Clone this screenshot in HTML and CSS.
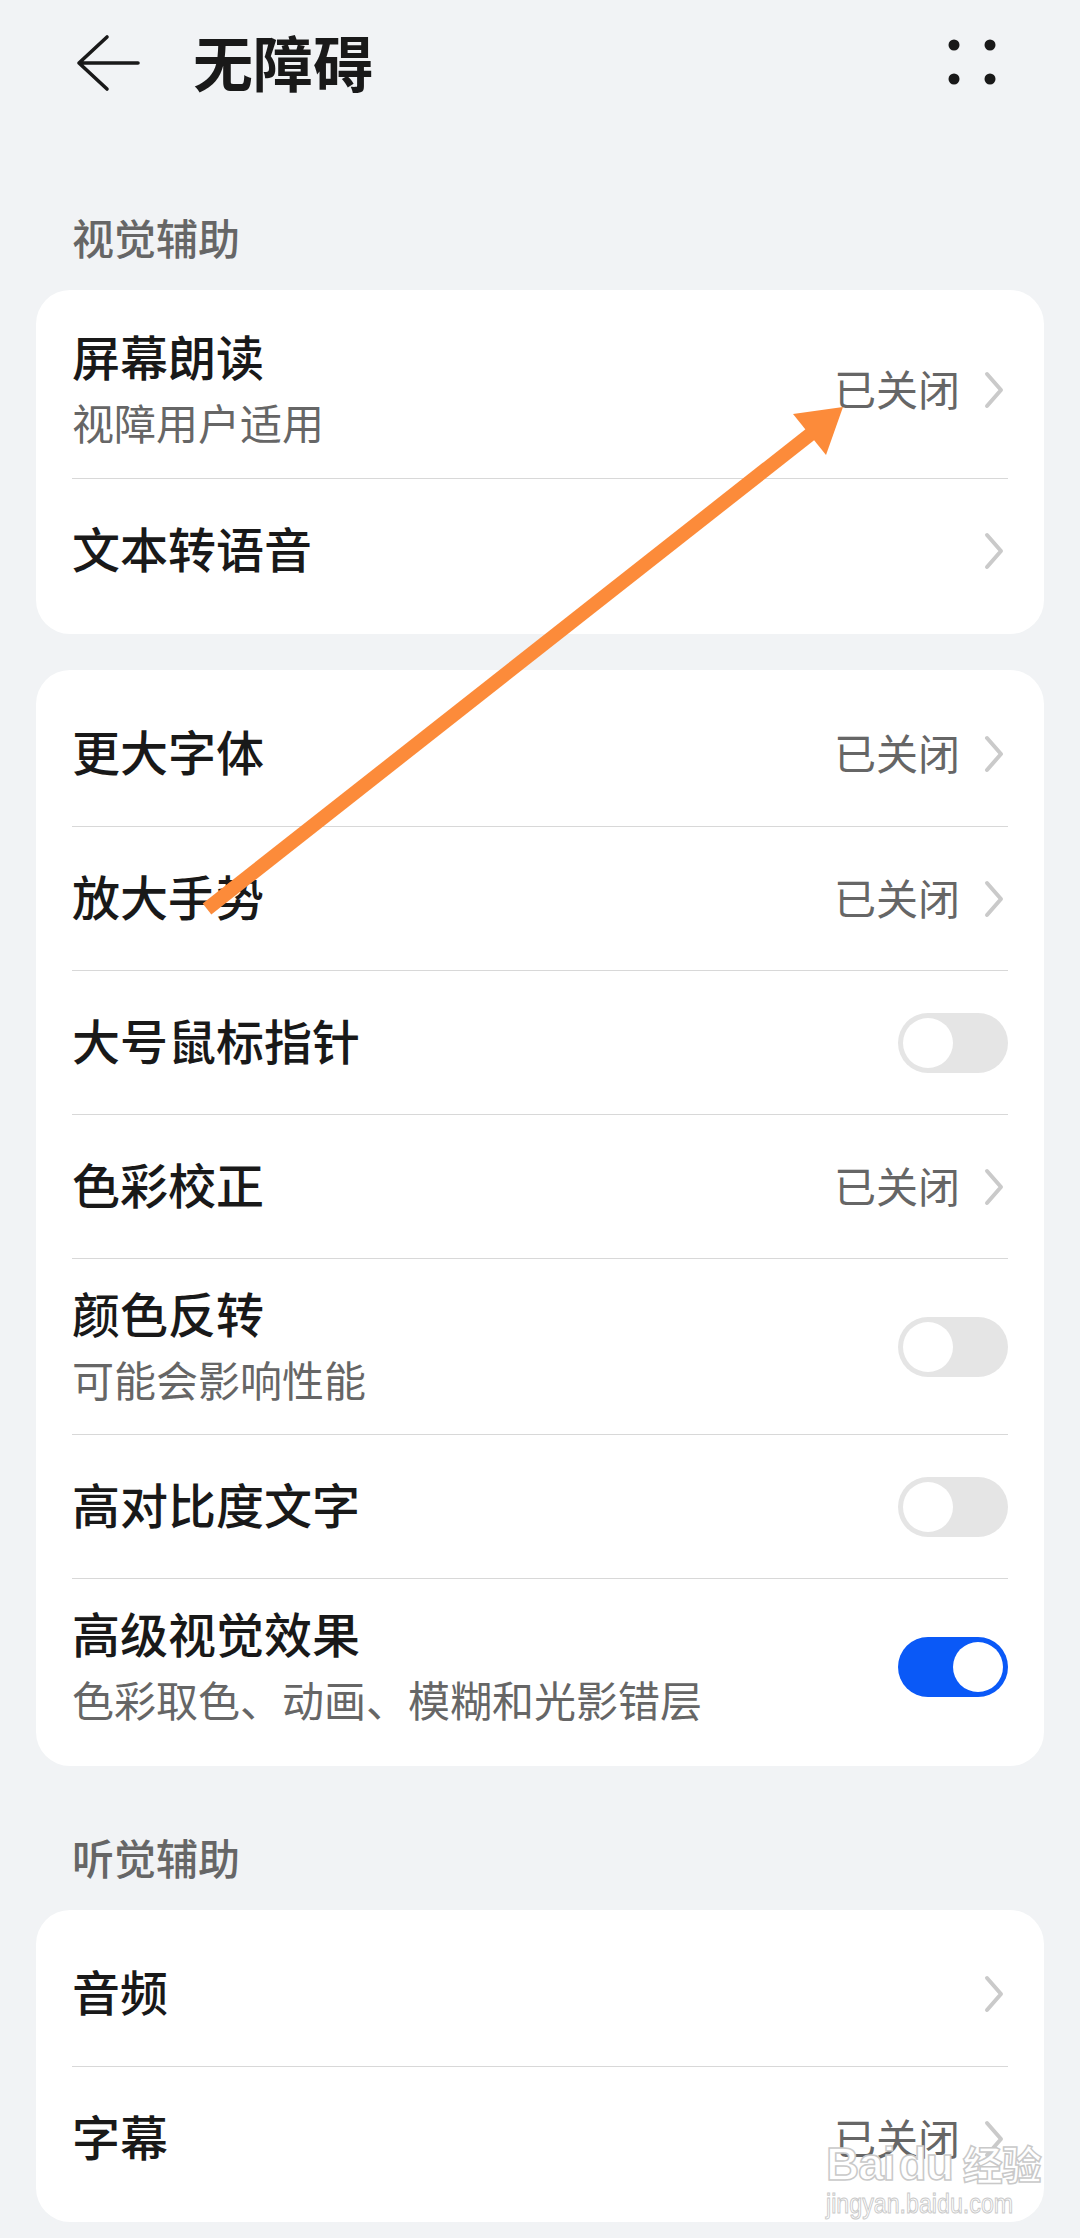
FILE: index.html
```html
<!DOCTYPE html>
<html lang="zh-CN">
<head>
  <meta charset="UTF-8">
  <meta name="viewport" content="width=device-width, initial-scale=1.0">
  <title>无障碍</title>
  <link rel="stylesheet" href="styles.css">
</head>
<body>
  <!-- Top bar -->
  <header class="topbar">
    <button class="icon-btn" aria-label="返回">
      <svg width="72" height="72" viewBox="0 0 72 72">
        <path d="M35 9 L7 35 L35 61 M7 35 L66 35" fill="none" stroke="#191919" stroke-width="3.6" stroke-linecap="round" stroke-linejoin="round"/>
      </svg>
    </button>
    <h1 class="page-title">无障碍</h1>
    <button class="icon-btn" aria-label="更多">
      <svg width="72" height="72" viewBox="0 0 72 72">
        <circle cx="18" cy="17" r="5.5" fill="#191919"/>
        <circle cx="54" cy="17" r="5.5" fill="#191919"/>
        <circle cx="18" cy="51" r="5.5" fill="#191919"/>
        <circle cx="54" cy="51" r="5.5" fill="#191919"/>
      </svg>
    </button>
  </header>

  <main class="content">
    <h2 class="section-title">视觉辅助</h2>

    <section class="card">
      <div class="row tall">
        <div class="row-text">
          <span class="row-title">屏幕朗读</span>
          <span class="row-sub">视障用户适用</span>
        </div>
        <span class="row-value">已关闭</span>
        <svg class="chevron" viewBox="0 0 24 40"><path d="M3 4 L17 20 L3 36"/></svg>
      </div>
      <div class="row">
        <div class="row-text"><span class="row-title">文本转语音</span></div>
        <svg class="chevron" viewBox="0 0 24 40"><path d="M3 4 L17 20 L3 36"/></svg>
      </div>
    </section>

    <section class="card">
      <div class="row">
        <div class="row-text"><span class="row-title">更大字体</span></div>
        <span class="row-value">已关闭</span>
        <svg class="chevron" viewBox="0 0 24 40"><path d="M3 4 L17 20 L3 36"/></svg>
      </div>
      <div class="row">
        <div class="row-text"><span class="row-title">放大手势</span></div>
        <span class="row-value">已关闭</span>
        <svg class="chevron" viewBox="0 0 24 40"><path d="M3 4 L17 20 L3 36"/></svg>
      </div>
      <div class="row">
        <div class="row-text"><span class="row-title">大号鼠标指针</span></div>
        <span class="toggle"></span>
      </div>
      <div class="row">
        <div class="row-text"><span class="row-title">色彩校正</span></div>
        <span class="row-value">已关闭</span>
        <svg class="chevron" viewBox="0 0 24 40"><path d="M3 4 L17 20 L3 36"/></svg>
      </div>
      <div class="row tall">
        <div class="row-text">
          <span class="row-title">颜色反转</span>
          <span class="row-sub">可能会影响性能</span>
        </div>
        <span class="toggle"></span>
      </div>
      <div class="row">
        <div class="row-text"><span class="row-title">高对比度文字</span></div>
        <span class="toggle"></span>
      </div>
      <div class="row tall">
        <div class="row-text">
          <span class="row-title">高级视觉效果</span>
          <span class="row-sub">色彩取色、动画、模糊和光影错层</span>
        </div>
        <span class="toggle on"></span>
      </div>
    </section>

    <h2 class="section-title">听觉辅助</h2>

    <section class="card">
      <div class="row">
        <div class="row-text"><span class="row-title">音频</span></div>
        <svg class="chevron" viewBox="0 0 24 40"><path d="M3 4 L17 20 L3 36"/></svg>
      </div>
      <div class="row">
        <div class="row-text"><span class="row-title">字幕</span></div>
        <span class="row-value">已关闭</span>
        <svg class="chevron" viewBox="0 0 24 40"><path d="M3 4 L17 20 L3 36"/></svg>
      </div>
    </section>
  </main>

  <!-- Annotation arrow drawn over the screenshot -->
  <svg class="annotation" width="1080" height="2238" viewBox="0 0 1080 2238">
    <line x1="207" y1="909" x2="812" y2="433" stroke="#fc8b3a" stroke-width="14"/>
    <polygon points="843,407 793,414 826,455" fill="#fc8b3a"/>
  </svg>

  <!-- Watermark -->
  <div class="watermark">
    <div class="wm-logo">Bai<span class="wm-du">du</span><span class="wm-cn">经验</span></div>
    <div class="wm-url">jingyan.baidu.com</div>
  </div>
</body>
</html>
```

FILE: styles.css
```css
* {
  box-sizing: border-box;
}

body {
  margin: 0;
  width: 1080px;
  min-height: 2238px;
  position: relative;
  overflow: hidden;
  background: #f1f3f5;
  font-family: "Noto Sans CJK SC", "Noto Sans", sans-serif;
  color: #191919;
}

/* Top bar */
.topbar {
  display: flex;
  align-items: center;
  height: 128px;
  padding: 0 72px;
}

.icon-btn {
  width: 72px;
  height: 72px;
  padding: 0;
  border: none;
  background: none;
  display: flex;
}

.page-title {
  flex: 1;
  margin: 0 0 0 49px;
  padding-bottom: 6px;
  font-size: 60px;
  line-height: 72px;
  font-weight: 700;
}

/* Content */
.content {
  padding: 18px 36px 0;
}

.section-title {
  margin: 0;
  padding: 66px 36px 28px;
  font-size: 42px;
  line-height: 50px;
  font-weight: 500;
  color: #666;
}

.card {
  background: #fff;
  border-radius: 34px;
  padding: 12px 0;
}

.card + .card {
  margin-top: 36px;
}

.row {
  display: flex;
  align-items: center;
  height: 144px;
  margin: 0 36px;
}

.row.tall {
  height: 176px;
}

.row + .row {
  border-top: 1px solid #d8d8d8;
}

.row-text {
  flex: 1;
  display: flex;
  flex-direction: column;
  gap: 12px;
  padding-bottom: 8px;
}

.row-title {
  font-size: 48px;
  line-height: 60px;
  font-weight: 500;
  color: #191919;
}

.row-sub {
  font-size: 42px;
  line-height: 50px;
  color: #666;
}

.row-value {
  font-size: 42px;
  line-height: 50px;
  color: #666;
  margin-right: 24px;
  padding-bottom: 4px;
}

.chevron {
  width: 24px;
  height: 40px;
}

.chevron path {
  fill: none;
  stroke: #cacaca;
  stroke-width: 4;
  stroke-linecap: round;
  stroke-linejoin: round;
}

/* Switches */
.toggle {
  position: relative;
  width: 110px;
  height: 60px;
  border-radius: 30px;
  background: #e5e5e5;
}

.toggle::after {
  content: "";
  position: absolute;
  top: 5px;
  left: 5px;
  width: 50px;
  height: 50px;
  border-radius: 50%;
  background: #fff;
}

.toggle.on {
  background: #0a59f7;
}

.toggle.on::after {
  left: 55px;
}

/* Overlays */
.annotation {
  position: absolute;
  top: 0;
  left: 0;
  pointer-events: none;
}

.watermark {
  position: absolute;
  left: 826px;
  top: 2138px;
  color: #fff;
  font-family: "Liberation Sans", sans-serif;
  pointer-events: none;
}

.wm-logo {
  font-size: 46px;
  line-height: 50px;
  font-weight: 700;
  -webkit-text-stroke: 1.5px #c9c9c9;
  letter-spacing: -1px;
}

.wm-du {
  margin-left: 4px;
}

.wm-cn {
  margin-left: 10px;
  font-family: "Noto Sans CJK SC", sans-serif;
  font-size: 40px;
}

.wm-url {
  font-size: 27px;
  line-height: 30px;
  color: #fff;
  -webkit-text-stroke: 1px #c9c9c9;
  transform: scaleX(0.86);
  transform-origin: left;
}
```
